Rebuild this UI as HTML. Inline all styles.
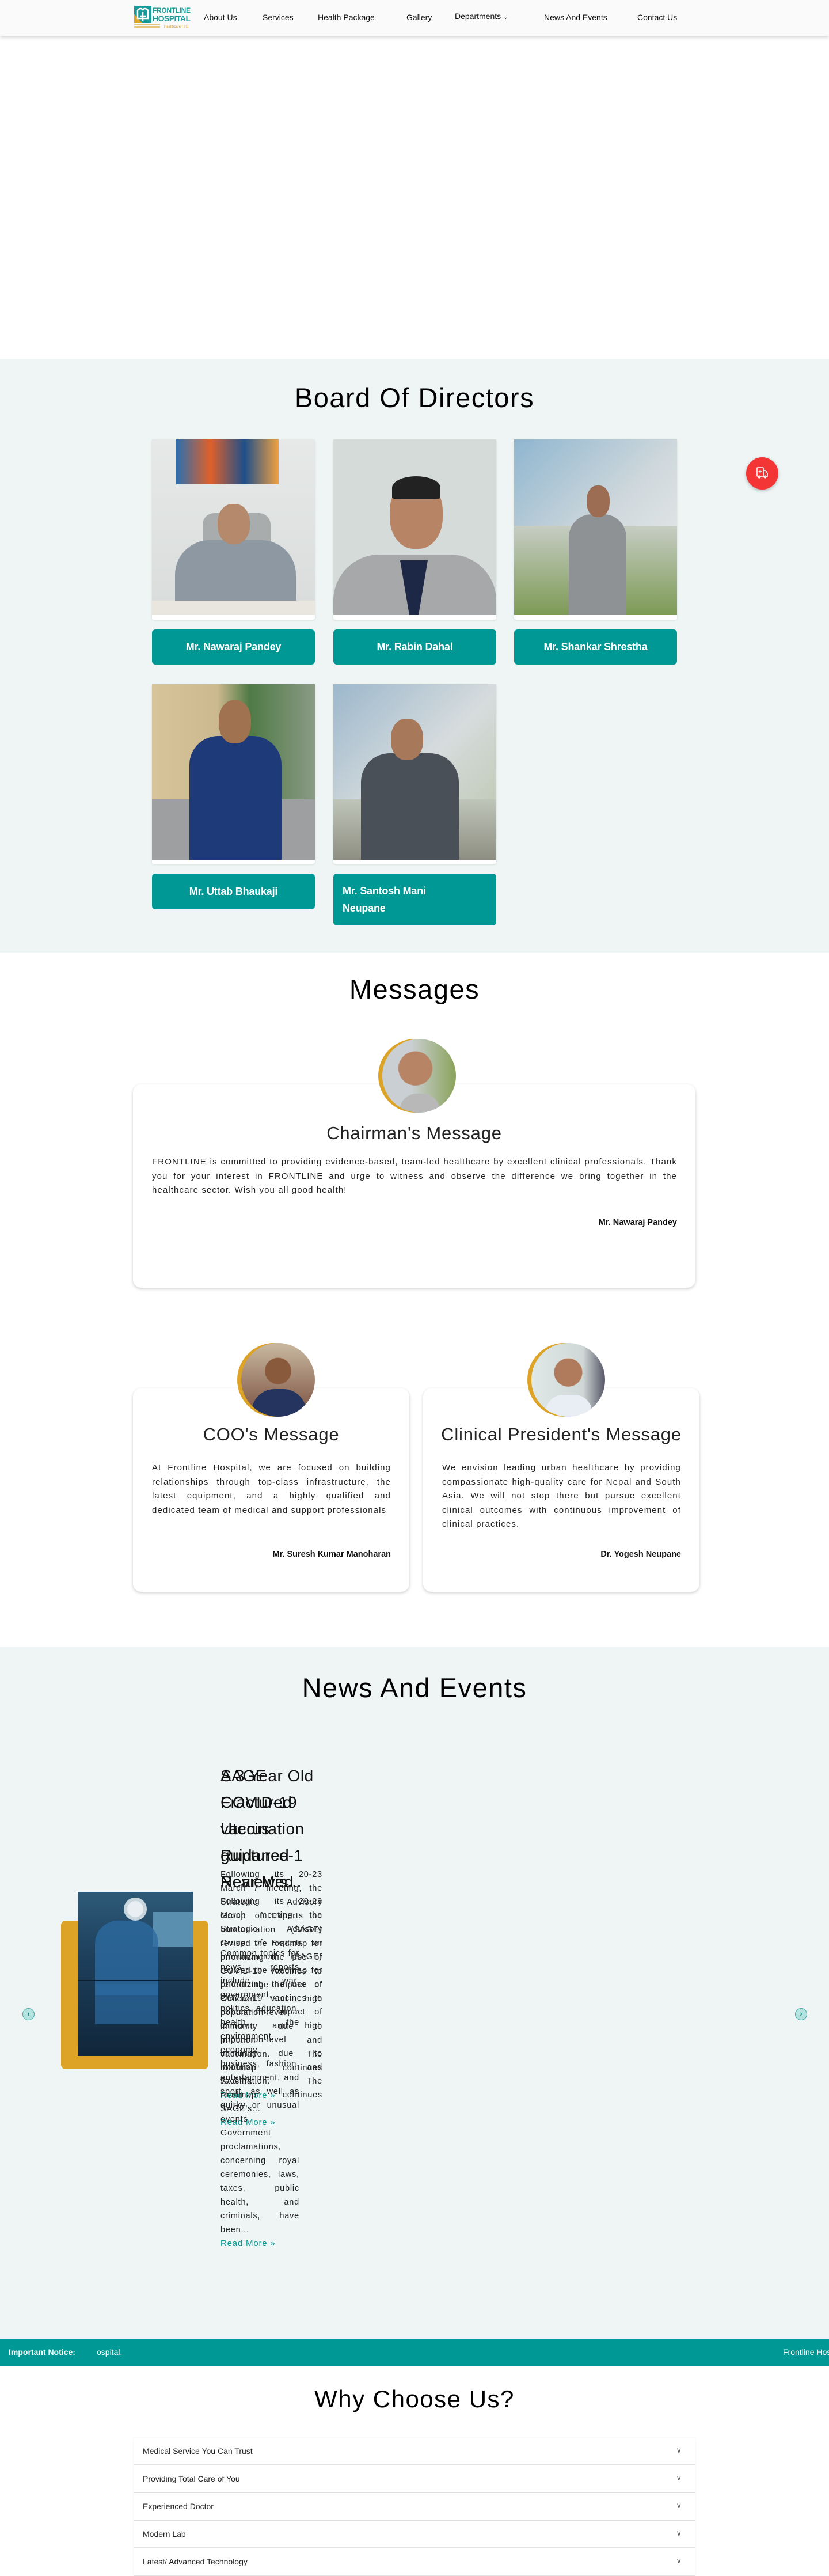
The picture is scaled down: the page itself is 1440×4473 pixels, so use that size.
<!DOCTYPE html>
<html><head><meta charset="utf-8">
<style>
*{box-sizing:border-box;margin:0;padding:0}
html,body{width:1440px;height:4461px;overflow:hidden;background:#fff;font-family:"Liberation Sans",sans-serif;color:#111}
.a{position:absolute}
.nav{left:0;top:0;width:1440px;height:62px;background:#fafafa;box-shadow:0 3px 6px rgba(0,0,0,.18);z-index:5}
.nav span{position:absolute;top:22px;font-size:14px;color:#111}
.sec{left:0;width:1440px}
h2{position:absolute;left:0;width:1440px;text-align:center;font-weight:400;font-size:47px;color:#000;letter-spacing:1.5px}
.card{background:#fff;border-radius:3px;box-shadow:0 1px 3px rgba(0,0,0,.12);width:283px}
.ph{position:absolute;left:0;top:0;width:283px;height:305px;overflow:hidden}
.btn{background:#009894;color:#fff;border-radius:6px;width:283px;font-size:18px;font-weight:bold;text-align:center;display:flex;align-items:center;justify-content:center;letter-spacing:-.2px}
.mc{background:#fff;border-radius:14px;box-shadow:0 2px 6px rgba(0,0,0,.2)}
.mc h3{position:absolute;left:0;width:100%;text-align:center;font-weight:400;font-size:31px;color:#222;letter-spacing:.8px}
.mc p{position:absolute;font-size:15px;line-height:24.5px;text-align:justify;color:#222;letter-spacing:1.1px}
.mc b{position:absolute;font-size:14.5px;color:#111}
.av{width:128px;height:128px}
.av .g{position:absolute;left:0;top:0;width:128px;height:128px;border-radius:50%;background:#dca327}
.av .p{position:absolute;left:7px;top:0;width:128px;height:128px;border-radius:50%;overflow:hidden}
.acc{left:232px;width:976px;height:48px;background:#fff;border-bottom:2px solid #e3e3e3;box-shadow:0 0 2px rgba(0,0,0,.06)}
.acc span{position:absolute;left:16px;top:15px;font-size:14px;color:#222}
.acc i{position:absolute;right:24px;top:14px;font-style:normal;font-size:13px;color:#555}
.nt{font-size:28px;line-height:46px;width:180px;color:#111;letter-spacing:.5px}
.nb{font-size:14.5px;line-height:24px;text-align:justify;color:#222;letter-spacing:.8px}
.rm{color:#009894;font-size:15px}
</style></head><body>

<div class="a nav">
  <svg class="a" style="left:233px;top:10px" width="100" height="40" viewBox="0 0 100 40">
    <rect x="0" y="0" width="30" height="30" fill="#1a9a98"/>
    <polygon points="0,30 0,14 14,30" fill="#dca327"/>
    <path d="M6 8c3-4 8-4 9 0c1-4 6-4 9 0v14h-18z" fill="none" stroke="#fff" stroke-width="2.5"/>
    <path d="M15 10v16M10 18h10" stroke="#fff" stroke-width="2.5"/>
    <rect x="0" y="32" width="45" height="2" fill="#e7c77a"/><rect x="0" y="36" width="45" height="2" fill="#e7c77a"/>
    <text x="32" y="12" font-size="12" font-weight="bold" fill="#1a9a98" font-family="Liberation Sans Narrow,Liberation Sans,sans-serif" textLength="66">FRONTLINE</text>
    <text x="32" y="27" font-size="14" font-weight="bold" fill="#1a9a98" font-family="Liberation Sans Narrow,Liberation Sans,sans-serif" textLength="66">HOSPITAL</text>
    <text x="52" y="38" font-size="6" fill="#c9962a" font-family="Liberation Sans,sans-serif">Healthcare First</text>
  </svg>
  <span style="left:354px">About Us</span>
  <span style="left:456px">Services</span>
  <span style="left:552px">Health Package</span>
  <span style="left:706px">Gallery</span>
  <span style="left:790px;top:20px">Departments <small style="font-size:10px">&#8964;</small></span>
  <span style="left:945px">News And Events</span>
  <span style="left:1107px">Contact Us</span>
</div>

<!-- Board -->
<div class="a sec" style="top:623px;height:1031px;background:#eef5f4">
  <h2 style="top:40px">Board Of Directors</h2>
</div>

<!-- row1 -->
<div class="a card" style="left:264px;top:763px;height:313px">
  <div class="ph" style="background:linear-gradient(#e6e9e8,#d9dcda)">
    <div class="a" style="left:42px;top:0;width:178px;height:78px;background:linear-gradient(90deg,#2a6fb0,#e0602a,#1f4f8a,#f0a040)"></div>
    <div class="a" style="left:88px;top:128px;width:118px;height:100px;background:#a9acad;border-radius:20px 20px 0 0"></div>
    <div class="a" style="left:40px;top:175px;width:210px;height:110px;background:#8d98a2;border-radius:60px 60px 0 0"></div>
    <div class="a" style="left:114px;top:112px;width:56px;height:70px;background:#b58a6c;border-radius:45%"></div>
    <div class="a" style="left:0;top:280px;width:283px;height:25px;background:#e9e6e0"></div>
  </div>
</div>
<div class="a card" style="left:579px;top:763px;height:313px">
  <div class="ph" style="background:#d4dbd9">
    <div class="a" style="left:0;top:200px;width:283px;height:110px;background:#a6a8aa;border-radius:80px 80px 0 0"></div>
    <div class="a" style="left:100px;top:210px;width:80px;height:95px;background:#1d2746;clip-path:polygon(20% 0,80% 0,60% 100%,40% 100%)"></div>
    <div class="a" style="left:98px;top:70px;width:92px;height:120px;background:#b88466;border-radius:45%"></div>
    <div class="a" style="left:102px;top:64px;width:84px;height:40px;background:#222;border-radius:50% 50% 10% 10%"></div>
  </div>
</div>
<div class="a card" style="left:893px;top:763px;height:313px">
  <div class="ph" style="background:linear-gradient(135deg,#8fb6cf,#cfd8dc 50%,#eef0ee)">
    <div class="a" style="left:0;top:150px;width:283px;height:155px;background:linear-gradient(#c6cdc4,#7d9a55)"></div>
    <div class="a" style="left:95px;top:130px;width:100px;height:175px;background:#8e9294;border-radius:40px 40px 0 0"></div>
    <div class="a" style="left:126px;top:80px;width:40px;height:55px;background:#9c6d52;border-radius:45%"></div>
  </div>
</div>
<div class="a btn" style="left:264px;top:1093px;height:61px">Mr. Nawaraj Pandey</div>
<div class="a btn" style="left:579px;top:1093px;height:61px">Mr. Rabin Dahal</div>
<div class="a btn" style="left:893px;top:1093px;height:61px">Mr. Shankar Shrestha</div>

<!-- row2 -->
<div class="a card" style="left:264px;top:1188px;height:312px">
  <div class="ph" style="background:linear-gradient(90deg,#d8c49b 0,#cdb98f 40%,#4f7a45 60%,#8a9a86)">
    <div class="a" style="left:0;top:200px;width:283px;height:105px;background:#9d9fa0"></div>
    <div class="a" style="left:65px;top:90px;width:160px;height:215px;background:#1f3a78;border-radius:50px 50px 0 0"></div>
    <div class="a" style="left:116px;top:28px;width:56px;height:75px;background:#a0724f;border-radius:45%"></div>
  </div>
</div>
<div class="a card" style="left:579px;top:1188px;height:312px">
  <div class="ph" style="background:linear-gradient(135deg,#9cb7cc,#d6dcdd 50%,#b9c2a8)">
    <div class="a" style="left:0;top:200px;width:283px;height:105px;background:linear-gradient(#bfc5b9,#8e8f82)"></div>
    <div class="a" style="left:48px;top:120px;width:170px;height:185px;background:#4a5058;border-radius:50px 50px 0 0"></div>
    <div class="a" style="left:100px;top:60px;width:56px;height:72px;background:#a8785a;border-radius:45%"></div>
  </div>
</div>
<div class="a btn" style="left:264px;top:1517px;height:62px">Mr. Uttab Bhaukaji</div>
<div class="a btn" style="left:579px;top:1517px;height:90px;justify-content:flex-start;text-align:left;padding:0 16px;line-height:30px">Mr. Santosh Mani<br>Neupane</div>

<!-- floating -->
<div class="a" style="left:1296px;top:794px;width:56px;height:56px;border-radius:50%;background:#f43535;box-shadow:0 2px 6px rgba(0,0,0,.25)">
  <svg class="a" style="left:17px;top:16px" width="22" height="22" viewBox="0 0 22 22" fill="none" stroke="#fff" stroke-width="1.6">
    <rect x="2" y="2" width="11" height="15" rx="1"/><path d="M13 7h4l3 5v5h-7"/><circle cx="6" cy="18" r="1.8"/><circle cx="16" cy="18" r="1.8"/><path d="M7.5 6v6M4.5 9h6"/>
  </svg>
</div>

<!-- Messages -->
<h2 style="top:1690px">Messages</h2>
<div class="a mc" style="left:231px;top:1883px;width:977px;height:353px">
  <h3 style="top:67px">Chairman's Message</h3>
  <p style="left:33px;top:123px;width:912px">FRONTLINE is committed to providing evidence-based, team-led healthcare by excellent clinical professionals. Thank you for your interest in FRONTLINE and urge to witness and observe the difference we bring together in the healthcare sector. Wish you all good health!</p>
  <b style="right:32px;top:232px">Mr. Nawaraj Pandey</b>
</div>
<div class="a av" style="left:657px;top:1804px"><div class="g"></div><div class="p" style="background:radial-gradient(circle at 45% 40%,#b88466 0 28%,transparent 29%),linear-gradient(90deg,#c9cfd2 40%,#8aa35a)"><div class="a" style="left:30px;top:95px;width:70px;height:40px;background:#b8b8b8;border-radius:30px 30px 0 0"></div></div></div>

<div class="a mc" style="left:231px;top:2411px;width:480px;height:353px">
  <h3 style="top:62px">COO's Message</h3>
  <p style="left:33px;top:126px;width:415px">At Frontline Hospital, we are focused on building relationships through top-class infrastructure, the latest equipment, and a highly qualified and dedicated team of medical and support professionals</p>
  <b style="right:32px;top:280px">Mr. Suresh Kumar Manoharan</b>
</div>
<div class="a av" style="left:412px;top:2332px"><div class="g"></div><div class="p" style="background:radial-gradient(circle at 50% 38%,#8a5a3c 0 22%,transparent 23%),linear-gradient(#c9b9a0,#7a5040)"><div class="a" style="left:18px;top:80px;width:95px;height:50px;background:#24345e;border-radius:40px 40px 0 0"></div></div></div>

<div class="a mc" style="left:735px;top:2411px;width:480px;height:353px">
  <h3 style="top:62px">Clinical President's Message</h3>
  <p style="left:33px;top:126px;width:415px">We envision leading urban healthcare by providing compassionate high-quality care for Nepal and South Asia. We will not stop there but pursue excellent clinical outcomes with continuous improvement of clinical practices.</p>
  <b style="right:32px;top:280px">Dr. Yogesh Neupane</b>
</div>
<div class="a av" style="left:916px;top:2332px"><div class="g"></div><div class="p" style="background:radial-gradient(circle at 50% 40%,#b07b5c 0 24%,transparent 25%),linear-gradient(90deg,#dfe8e6,#cfd8d6 70%,#556)"><div class="a" style="left:25px;top:90px;width:80px;height:40px;background:#e8eef4;border-radius:30px 30px 0 0"></div></div></div>

<!-- News -->
<div class="a sec" style="top:2860px;height:1201px;background:#eef5f4">
  <h2 style="top:43px">News And Events</h2>
</div>
<div class="a" style="left:106px;top:3335px;width:256px;height:258px;background:#dca327;border-radius:8px"></div>
<div class="a" style="left:135px;top:3285px;width:200px;height:285px;background:linear-gradient(#2d5a78,#1d3f5c 40%,#10263a);overflow:hidden">
  <div class="a" style="left:80px;top:10px;width:40px;height:40px;border-radius:50%;background:#e8eef2;border:6px solid #c8d6de"></div>
  <div class="a" style="left:130px;top:35px;width:70px;height:60px;background:#5a8fb0"></div>
  <div class="a" style="left:30px;top:50px;width:110px;height:130px;background:#2c6aa0;border-radius:40px 40px 0 0;opacity:.8"></div>
  <div class="a" style="left:0;top:153px;width:200px;height:2px;background:#0c1e2e"></div>
  <div class="a" style="left:30px;top:160px;width:110px;height:70px;background:#2c6aa0;opacity:.7"></div>
</div>
<div class="a" style="left:39px;top:3487px;width:21px;height:21px;border-radius:50%;background:#b5e3df;border:1.5px solid #3aaaa4;color:#08807b;font-size:13px;font-weight:bold;text-align:center;line-height:17px">&#8249;</div>
<div class="a" style="left:1381px;top:3487px;width:21px;height:21px;border-radius:50%;background:#b5e3df;border:1.5px solid #3aaaa4;color:#08807b;font-size:13px;font-weight:bold;text-align:center;line-height:17px">&#8250;</div>

<div class="a nt" style="left:383px;top:3061px">SAGE COVID-19 vaccination guidance- Reviewed</div>
<div class="a nt" style="left:383px;top:3061px">A 3 Year Old Fractured Uterus- Ruptured 1 Near Mis...</div>
<div class="a nb" style="left:383px;top:3243px;width:177px">Following its 20-23 March 7 meeting, the Strategic Advisory Group of Experts on Immunization (SAGE) revised the roadmap for prioritizing the use of COVID-19 vaccines to reflect the impact of Omicron and high population-level immunity due to infection and vaccination. The roadmap continues SAGE's...<br><span class="rm">Read More &#187;</span></div>
<div class="a nb" style="left:383px;top:3290px;width:177px">Following its 20-23 March meeting, the Strategic Advisory Group of Experts on Immunization (SAGE) revised the roadmap for prioritizing the use of COVID-19 vaccines to reflect the impact of Omicron and high population-level immunity due to infection and vaccination. The roadmap continues SAGE's...<br><span class="rm">Read More &#187;</span></div>
<div class="a nb" style="left:383px;top:3380px;width:137px">Common topics for news reports include war, government, politics, education, health, the environment, economy, business, fashion, entertainment, and sport, as well as quirky or unusual events. Government proclamations, concerning royal ceremonies, laws, taxes, public health, and criminals, have been...<br><span class="rm">Read More &#187;</span></div>

<!-- Notice -->
<div class="a" style="left:0;top:4061px;width:1440px;height:48px;background:#009894;color:#fff;font-size:14px">
  <span class="a" style="left:15px;top:15px;font-weight:bold">Important Notice:</span>
  <span class="a" style="left:168px;top:15px">ospital.</span>
  <span class="a" style="left:1360px;top:15px;white-space:nowrap">Frontline Hospital</span>
</div>

<h2 style="top:4142px;font-size:42px">Why Choose Us?</h2>
<div class="a acc" style="top:4233px"><span>Medical Service You Can Trust</span><i>&#8744;</i></div>
<div class="a acc" style="top:4281px"><span>Providing Total Care of You</span><i>&#8744;</i></div>
<div class="a acc" style="top:4329px"><span>Experienced Doctor</span><i>&#8744;</i></div>
<div class="a acc" style="top:4377px"><span>Modern Lab</span><i>&#8744;</i></div>
<div class="a acc" style="top:4425px"><span>Latest/ Advanced Technology</span><i>&#8744;</i></div>
</body></html>
